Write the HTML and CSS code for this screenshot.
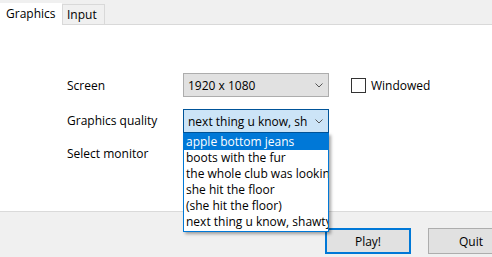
FILE: index.html
```html
<!DOCTYPE html>
<html lang="en">
<head>
    <meta charset="UTF-8">
    <title>Settings</title>
    <link rel="stylesheet" href="styles.css">
</head>
<body>
    <div class="tabs">
        <div class="tab active">Graphics</div>
        <div class="tab">Input</div>
    </div>
    <div class="content">
        <div class="row">
            <div class="label">Screen</div>
            <div class="combo">
                <span class="combo-text">1920 x 1080</span>
                <svg class="chevron" width="8" height="5" viewBox="0 0 8 5"><path d="M0.5 0.5 L4 4 L7.5 0.5" fill="none" stroke="#555" stroke-width="1"/></svg>
            </div>
            <label class="check">
                <span class="box"></span>
                <span>Windowed</span>
            </label>
        </div>
        <div class="row row-quality">
            <div class="label">Graphics quality</div>
            <div class="combo open">
                <span class="combo-text">next thing u know, shawty</span>
                <svg class="chevron" width="8" height="5" viewBox="0 0 8 5"><path d="M0.5 0.5 L4 4 L7.5 0.5" fill="none" stroke="#555" stroke-width="1"/></svg>
                <ul class="dropdown">
                    <li class="selected">apple bottom jeans</li>
                    <li>boots with the fur</li>
                    <li>the whole club was lookin</li>
                    <li>she hit the floor</li>
                    <li>(she hit the floor)</li>
                    <li>next thing u know, shawty</li>
                </ul>
            </div>
        </div>
        <div class="row row-monitor">
            <div class="label">Select monitor</div>
        </div>
    </div>
    <div class="footer">
        <button class="btn default">Play!</button>
        <button class="btn">Quit</button>
    </div>
</body>
</html>
```

FILE: styles.css
```css
body {
    margin: 0;
    width: 492px;
    height: 257px;
    overflow: hidden;
    font-family: "Open Sans", "Liberation Sans", sans-serif;
    font-size: 12px;
    color: #000;
    background-color: #fff;
}
.tabs {
    display: flex;
    align-items: flex-end;
    height: 24px;
    background-color: #f0f0f0;
    border-bottom: 1px solid #d9d9d9;
}
.tab {
    width: 43px;
    height: 20px;
    box-sizing: border-box;
    padding-left: 4px;
    line-height: 19px;
    background-color: #f0f0f0;
    border: 1px solid #d9d9d9;
    border-bottom: none;
}
.tab.active {
    width: 62px;
    height: 22px;
    line-height: 20px;
    padding-left: 6px;
    background-color: #fff;
    border-color: #fff;
    border-left: none;
    margin-bottom: -1px;
}
.content {
    height: 186px;
    padding-top: 48px;
    box-sizing: border-box;
}
.row {
    display: flex;
    align-items: center;
    height: 24px;
    padding-left: 67px;
}
.row-quality {
    margin-top: 12px;
}
.row-monitor {
    margin-top: 8px;
}
.label {
    width: 116px;
}
.row-quality .label {
    margin-top: -2px;
}
.combo {
    position: relative;
    display: flex;
    align-items: center;
    width: 146px;
    height: 24px;
    box-sizing: border-box;
    padding: 0 5px 0 4px;
    background-color: #e1e1e1;
    border: 1px solid #adadad;
}
.combo.open {
    background-color: #cce4f7;
    border-color: #005499;
}
.combo-text {
    flex: 1;
    white-space: nowrap;
    overflow: hidden;
    margin-right: 8px;
}
.chevron {
    flex-shrink: 0;
}
.check {
    display: flex;
    align-items: center;
    margin-left: 22px;
    gap: 5px;
}
.box {
    width: 13px;
    height: 13px;
    border: 1px solid #333;
    background-color: #fff;
}
.dropdown {
    position: absolute;
    top: 23px;
    left: -1px;
    width: 146px;
    box-sizing: border-box;
    margin: 0;
    padding: 0 0 1px;
    list-style: none;
    background-color: #fff;
    border: 1px solid #0078d7;
    box-shadow: 2px 2px 3px rgba(0, 0, 0, 0.35);
    z-index: 2;
}
.dropdown li {
    height: 16px;
    line-height: 16px;
    padding-left: 2px;
    white-space: nowrap;
    overflow: hidden;
}
.dropdown li.selected {
    background-color: #0078d7;
    color: #fff;
}
.footer {
    display: flex;
    gap: 17px;
    height: 46px;
    box-sizing: border-box;
    padding: 16px 0 0 325px;
    background-color: #f0f0f0;
    border-top: 1px solid #dadada;
}
.btn {
    flex-shrink: 0;
    width: 86px;
    height: 26px;
    font-family: inherit;
    font-size: 12px;
    color: #000;
    background-color: #e1e1e1;
    border: 1px solid #adadad;
    padding: 0;
}
.btn.default {
    border: 2px solid #0078d7;
}
```
